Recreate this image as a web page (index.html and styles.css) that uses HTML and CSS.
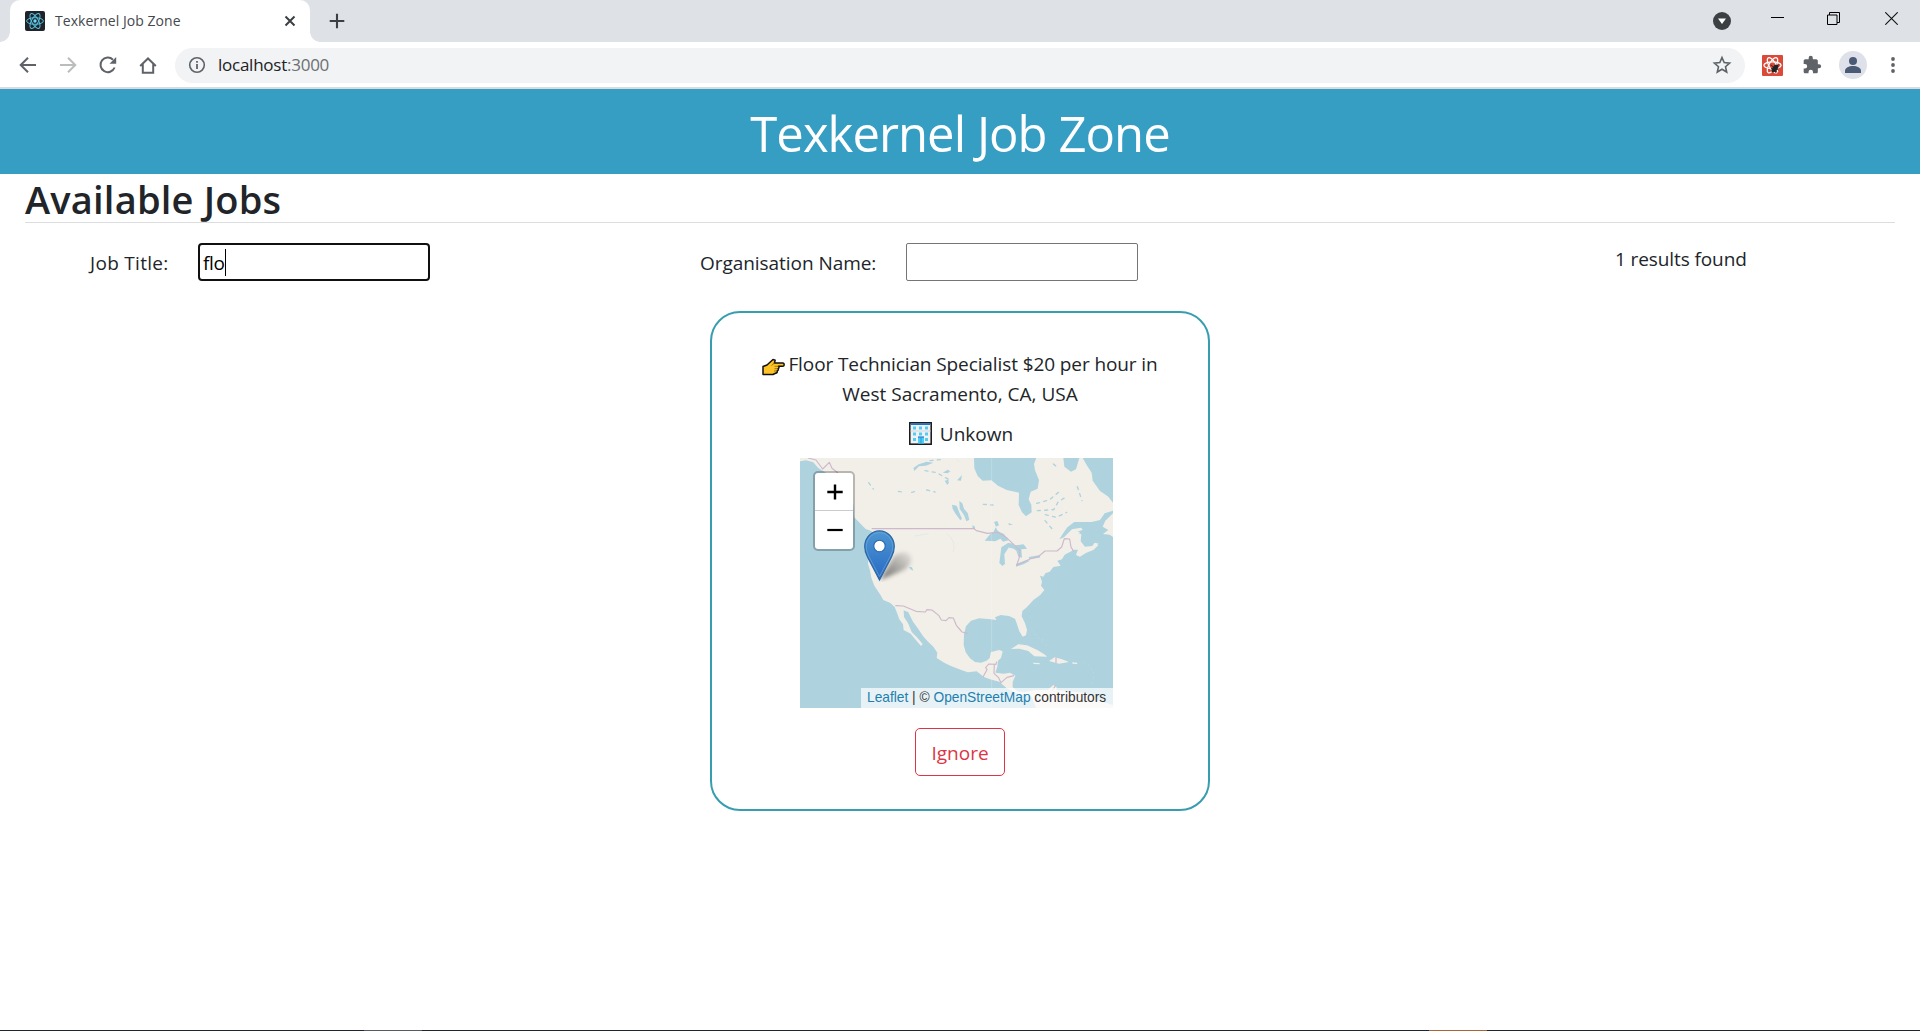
FILE: index.html
```html
<!DOCTYPE html>
<html lang="en">
<head>
<meta charset="utf-8">
<title>Texkernel Job Zone</title>
<link rel="stylesheet" href="styles.css">
</head>
<body>
<div class="tabstrip">
  <div class="tab">
    <svg class="favicon" viewBox="0 0 20 20"><rect width="20" height="20" rx="2" fill="#20232a"/><g fill="none" stroke="#53c1de" stroke-width="1"><ellipse cx="10" cy="10" rx="8.4" ry="3.3"/><ellipse cx="10" cy="10" rx="8.4" ry="3.3" transform="rotate(60 10 10)"/><ellipse cx="10" cy="10" rx="8.4" ry="3.3" transform="rotate(120 10 10)"/></g><circle cx="10" cy="10" r="1.7" fill="#61dafb"/></svg>
    <span class="tab-title">Texkernel Job Zone</span>
    <svg class="tab-close" viewBox="0 0 12 12"><path d="M1.5 1.5l9 9M10.5 1.5l-9 9" stroke="#3c4043" stroke-width="2"/></svg>
  </div>
  <svg class="new-tab" viewBox="0 0 16 16"><path d="M8 .7v14.6M.7 8h14.6" stroke="#3c4043" stroke-width="2.1"/></svg>
  <div class="window-buttons">
    <svg width="18" height="18" viewBox="0 0 18 18" class="wb-search"><circle cx="9" cy="9" r="9" fill="#3c4043"/><path d="M5 6.5h8L9 12z" fill="#fff"/></svg>
    <svg width="13" height="13" viewBox="0 0 13 13" class="wb-min"><path d="M0 5.5h13" stroke="#000"/></svg>
    <svg width="13" height="13" viewBox="0 0 13 13" class="wb-max"><path d="M.5 3h9.5v9.500H.5zM2.500 3V.5h10v10H10" fill="none" stroke="#000"/></svg>
    <svg width="13" height="13" viewBox="0 0 13 13" class="wb-close"><path d="M.3.3l12.400 12.400M12.700.3L.3 12.700" stroke="#111" stroke-width="1.100"/></svg>
  </div>
</div>
<div class="toolbar">
  <svg class="nav" viewBox="0 0 20 20"><path d="M18 10H3M10 2.700L2.700 10l7.300 7.300" fill="none" stroke="#5f6368" stroke-width="2"/></svg>
  <svg class="nav" viewBox="0 0 20 20"><path d="M2 10h15M10 2.700l7.300 7.300-7.300 7.300" fill="none" stroke="#babcbe" stroke-width="2"/></svg>
  <svg class="nav" viewBox="0 0 20 20"><path d="M16.600 12.500A7.300 7.300 0 1 1 15 4.700" fill="none" stroke="#5f6368" stroke-width="2"/><path d="M18.200 2v6.700h-6.700z" fill="#5f6368"/></svg>
  <svg class="nav" viewBox="0 0 20 20"><path d="M2.200 11L10 3.500l7.800 7.500M4.800 9.200v8.600h10.400V9.200" fill="none" stroke="#5f6368" stroke-width="2"/></svg>
  <div class="omnibox">
    <svg class="info" viewBox="0 0 18 18"><circle cx="9" cy="9" r="7.300" fill="none" stroke="#5f6368" stroke-width="1.600"/><path d="M9 8v5M9 5v1.800" stroke="#5f6368" stroke-width="1.800"/></svg>
    <span class="url">localhost<span class="port">:3000</span></span>
    <svg class="star" viewBox="0 0 20 20"><path d="M10 2.600l2.200 5 5.400.5-4.100 3.600 1.200 5.300-4.700-2.800L5.300 17l1.200-5.300-4.100-3.600 5.400-.5z" fill="none" stroke="#5f6368" stroke-width="1.600"/></svg>
  </div>
  <div class="extensions">
    <svg class="react-ext" viewBox="0 0 20 20"><rect width="20" height="20" rx="1" fill="#da4a37"/><g fill="none" stroke="#fff" stroke-width="1.200"><ellipse cx="10" cy="9.800" rx="8.200" ry="3.300"/><ellipse cx="10" cy="9.800" rx="8.200" ry="3.300" transform="rotate(60 10 9.800)"/><ellipse cx="10" cy="9.800" rx="8.200" ry="3.300" transform="rotate(120 10 9.800)"/></g><ellipse cx="12.300" cy="12.800" rx="2.300" ry="4.300" transform="rotate(40 12.300 12.800)" fill="#222"/><path d="M8 9.500l8 5M9.500 16l6.500-7M12 9.500l1 7.500M8.500 12.500l6 4" stroke="#222" stroke-width=".8"/></svg>
    <svg class="puzzle" viewBox="0 0 24 24"><path d="M20.500 11H19V7c0-1.100-.9-2-2-2h-4V3.500a2.500 2.500 0 0 0-5 0V5H4c-1.100 0-2 .9-2 2v3.800h1.500a2.700 2.700 0 0 1 0 5.400H2V20c0 1.100.9 2 2 2h3.800v-1.500a2.700 2.700 0 0 1 5.400 0V22H17c1.100 0 2-.9 2-2v-4h1.500a2.500 2.500 0 0 0 0-5z" fill="#5f6368"/></svg>
    <svg class="avatar" viewBox="0 0 28 28"><circle cx="14" cy="14" r="14" fill="#dee1e9"/><circle cx="14" cy="10" r="4" fill="#4b5a75"/><path d="M6 22v-2c0-3.200 4-5 8-5s8 1.800 8 5v2z" fill="#4b5a75"/></svg>
    <svg class="dots" viewBox="0 0 4 16"><g fill="#5f6368"><circle cx="2" cy="2" r="1.900"/><circle cx="2" cy="8" r="1.900"/><circle cx="2" cy="14" r="1.900"/></g></svg>
  </div>
</div>
<header class="banner"><span class="banner-text">Texkernel Job Zone</span></header>
<main>
  <h1><span class="h1-text">Available Jobs</span></h1>
  <div class="filters">
    <div class="filter"><span class="label label-job">Job Title:</span><div class="field focused"><span class="typed">flo</span><i class="caret"></i></div></div>
    <div class="filter"><span class="label label-org">Organisation Name:</span><div class="field"></div></div>
    <div class="results"><span class="results-text">1 results found</span></div>
  </div>
  <section class="card">
    <p class="job">
      <span class="line"><svg class="hand" viewBox="0 0 23 18"><path d="M1 8.500L5 7l6-5.500 2.200.6-.8 3H21c1.600.3 1.600 3 0 3.200h-4.500c.9.8.6 2-.4 2.300.5.9.1 1.900-.8 2.200.2 1.300-.6 2.300-1.800 2.500l-2.500 1.200H1z" fill="#fcc427" stroke="#111" stroke-width="1.500" stroke-linejoin="round"/><path d="M12.400 5.100L9.500 7.500M12.500 8.300h4M12.500 10.700h3.500M12 13h3" stroke="#7a5500" stroke-width=".7"/></svg><span class="l1">Floor Technician Specialist $20 per hour in</span></span>
      <span class="line"><span class="l2">West Sacramento, CA, USA</span></span>
    </p>
    <p class="company"><svg class="building" viewBox="0 0 23 23"><rect x=".8" y=".8" width="21.400" height="21.400" fill="#f0f1f3" stroke="#111" stroke-width="1.500"/><path d="M1.500 2.200h20" stroke="#1d6fd0" stroke-width="1.600"/><path d="M1.500 9h20" stroke="#d8d8dc"/><g fill="#50cdf5"><path d="M4 4.500h3v3H4zM10 4.500h3v3h-3zM16 4.500h3v3h-3zM4 10.500h3v3H4zM10 10.500h3v3h-3zM16 10.500h3v3h-3zM4 16h3v3H4zM16 16h3v3h-3z"/><path d="M9 15h6v6.500H9z"/></g><path d="M9 15h6" stroke="#1769ca"/><path d="M12 15v6.500" stroke="#209ed5"/></svg><span class="l3">Unkown</span></p>
    <div class="map">
      <svg class="tiles" viewBox="30 24 939 750" preserveAspectRatio="none">
        <rect x="30" y="24" width="939" height="750" fill="#aed3df"/>
        <g fill="#f2efe9">
          <path d="M30 24H552L553 55 563 78 578 92 604 91 624 107 650 120 687 128 686 165 696 187 708 199 725 187 724 164 716 148 722 125 743 116 747 90 735 61 732 42 739 24H820L823 50 843 65 858 58 868 24H878L890 45 905 68 908 92 930 123 955 140 969 158V182L944 190 930 210 905 216H853L832 232 818 252 808 268 822 262 846 238 873 233 878 239 859 247 874 253 872 274 885 290 907 288 914 278 926 281 906 296 885 303 868 319 858 314 864 299 852 299 824 314 816 328 802 332 812 347 790 351 779 365 766 370 760 380 750 377 756 395 753 407 763 420 750 436 731 449 711 471 697 483 695 499 705 520 711 539 708 556 698 560 688 544 680 520 675 506 657 498 632 495 615 502 619 510 596 507 567 505 543 512 528 529 522 552 521 585 527 607 540 625 555 636 573 638 590 632 599 624 603 606 628 600 638 604 633 624 624 632 622 650 616 668 641 671 660 668 676 677 668 696 668 712 684 725 705 726 735 720 773 720 790 705 800 711 799 720 890 730 920 750 969 765V774H738L725 740 679 730 650 715 628 695 600 688 582 681 560 664 533 667 508 658 483 648 464 639 440 624 442 608 430 590 412 573 399 558 385 537 369 515 355 487 341 481 342 501 355 521 365 546 380 561 398 582 393 588 375 567 362 551 341 540 339 523 328 508 321 488 314 471 301 459 280 450 271 434 253 407 244 383 240 361 234 342 236 314 240 276 251 249 232 233 213 218 192 202 191 178 188 145 160 120 143 94 124 77 104 66 84 53 70 37 48 31 30 34Z"/>
          <path d="M195 204l19 9 22 17 15 15-24-8zM969 190l-23 22-8 18 17 10-16 12 20 2 10 7zM860 316l8-8 24-10 26-14 7 2-15 14-21 8-19 12z"/>
          <path d="M663 597l22-14 26 3 32 15 23 14 5 5-38-1-18-16-27-7zM777 633l17-11 22 6 21 8-30 5zM728 638l20 1 2 4-18-1zM847 637l15 1-1 4-14-1zM853 244l18 3-8 4z"/>
        </g>
        <g fill="#aed3df">
          <path d="M584 272l15-18 12-9 6-13 7 12 18 8 13 19-16 4-8-9-15 8zM634 292l20-13 18 2-17 13-12 19 2 29-8 6-9-9zM656 278l20 8 25-3 10 13-17 2 2 25-11-3-6-18-8-6-13-3zM678 342l33-12 9 2-18 10-24 8zM716 321l35-6-2 8-31 4z"/>
          <path d="M508 153l9 7 5 16 11 13 5 20-9 5-7-18-13-20zM486 164l14 3 7 18 9 21-5 5-14-19-9-15zM612 216l10-3 5 13-9 4zM655 219l14 5-12 2zM547 226l7 3 2 10-8-2zM370 54l16-11 24-8 20 3-22 9-21 2-14 14zM458 68l15-9 8 5-8 6zM464 92l13-3-6 14zM501 91l15-16-3 17zM357 350l9 2 4 10-9-4zM725 85l9-3 6 16-9 8z"/>
        </g>
        <g fill="none" stroke="#aed3df" stroke-width="4" stroke-linecap="round" stroke-dasharray="9 13">
          <path d="M740 160l38-10 36-30M742 182l49-3 14-24 26-16M766 194l33 8 31-15M862 110l14 42M405 62l35 6 39 22-7 12M410 120l25 6M236 98l14 19M325 124l16 3M365 127l9-2M790 42l15 12M580 163l29 2M765 212l26 30M420 32l38-4M155 140l25 28"/>
        </g>
        <g fill="none" stroke="#dce6e4" stroke-width="2"><path d="M375 258l40-7M470 250q30 25 20 55M500 28l8 8"/></g>
        <path d="M605 24v750" stroke="#fff" stroke-opacity=".25" stroke-width="2"/>
        <g fill="none" stroke="#cdb9cb" stroke-width="3.500" stroke-linejoin="round">
          <path d="M54 24l24 6 20 27 20-20 8 18 18 14M245 236H552l7 6 33 8 32-3 28 18 28 27 10 9-2 21-8 24 15-8 25-11 25-7 20-17h36l14-12 8-25 16 1 4 24 8 13M316 467l24 1 38 16 28 2 5-7 15 1 20 16 8 14 14 2 9-9 13 1 9 22 12 14 5 6 19 5M579 681l7-13 5-9-4-6 9-11 22 1 2-8M613 644l-1 26 13 12 8 16 18-16 21-5M798 622v18M797 706l-9 14"/>
        </g>
        <g fill="none" stroke="#bad9df" stroke-width="3" stroke-dasharray="5 10"><path d="M725 540l15 20 18 17 18 14M880 635l20 13 10 18 0 20-7 18M755 570l12-3"/></g>
      </svg>
      <svg class="marker" viewBox="0 0 56 52">
        <defs><linearGradient id="pin" x1="0" y1="0" x2="0" y2="1"><stop offset="0" stop-color="#4e96d2"/><stop offset="1" stop-color="#2769c4"/></linearGradient><linearGradient id="shade" x1="0" y1="1" x2="1" y2="0"><stop offset="0" stop-color="#000" stop-opacity=".55"/><stop offset=".9" stop-color="#000" stop-opacity=".1"/></linearGradient><filter id="soft" x="-30%" y="-30%" width="160%" height="160%"><feGaussianBlur stdDeviation="2.200"/></filter></defs>
        <path d="M16 50L30 26Q41 19 46 25 50 33 40 40Z" fill="url(#shade)" filter="url(#soft)"/>
        <path d="M15.500 50L3.500 27Q.7 21.500.7 16.500A14.800 15.600 0 0 1 30.300 16.500Q30.300 21.500 27.500 27Z" fill="url(#pin)" stroke="#2b66a3" stroke-width="1.200"/>
        <path d="M15.500 46.500L4.900 26.500Q2.200 21 2.200 16.500A13.300 14 0 0 1 28.800 16.500Q28.800 21 26.100 26.500Z" fill="none" stroke="#72add9" stroke-width="1" opacity=".6"/>
        <circle cx="15.500" cy="16" r="5.700" fill="#fff" stroke="#2c68aa" stroke-width="1.100"/>
      </svg>
      <div class="zoom"><div class="zin"><svg viewBox="0 0 16 16"><path d="M8 .5v15M.3 8h15.400" stroke="#000" stroke-width="2.400"/></svg></div><div><svg viewBox="0 0 16 16"><path d="M.3 8h15.400" stroke="#000" stroke-width="2.200"/></svg></div></div>
      <div class="attribution"><span class="link">Leaflet</span> | © <span class="link">OpenStreetMap</span> contributors</div>
    </div>
    <button class="ignore"><span>Ignore</span></button>
  </section>
</main>
<footer class="taskbar"><i class="task task-gray"></i><i class="task task-orange"></i></footer>
</body>
</html>
```
FILE: styles.css
```css
* { box-sizing: border-box; }
body {
  margin: 0;
  height: 1031px;
  overflow: hidden;
  display: flex;
  flex-direction: column;
  background: #fff;
  color: #212529;
  font: 19px/30px "Open Sans", "Noto Sans", sans-serif;
}
svg { display: block; flex: none; }
p, h1 { margin: 0; }
span { white-space: nowrap; }

.tabstrip { height: 42px; flex: none; display: flex; align-items: center; background: #dee1e6; padding-left: 10px; }
.tab { position: relative; width: 300px; height: 42px; display: flex; align-items: center; padding: 0 14px 0 15px; background: #fff; border-radius: 10px 10px 0 0; }
.tab::before, .tab::after { content: ""; position: absolute; bottom: 0; width: 10px; height: 10px; }
.tab::before { left: -10px; background: radial-gradient(circle at 0 0, transparent 9.500px, #fff 10px); }
.tab::after { right: -10px; background: radial-gradient(circle at 100% 0, transparent 9.500px, #fff 10px); }
.favicon { width: 20px; height: 20px; }
.tab-title { margin-left: 10px; font-size: 14px; color: #45484c; letter-spacing: .05px; }
.tab-close { width: 12px; height: 12px; margin-left: auto; }
.new-tab { width: 16px; height: 16px; margin-left: 19px; }
.window-buttons { display: flex; margin-left: auto; height: 42px; padding-right: 22px; }
.wb-search { margin: 12px 40px 0 0; }
.wb-min { margin: 12px 43px 0 0; }
.wb-max { margin: 12px 45px 0 0; }
.wb-close { margin-top: 12px; }

.toolbar { height: 47px; flex: none; display: flex; align-items: center; padding: 1px 20px 0 18px; border-bottom: 2px solid #d9dbdf; }
.nav { width: 20px; height: 20px; margin-right: 20px; }
.omnibox { width: 1570px; height: 35px; margin-left: -3px; display: flex; align-items: center; padding: 0 13px; border-radius: 18px; background: #f1f3f4; }
.info { width: 18px; height: 18px; }
.url { margin-left: 12px; font-size: 17px; letter-spacing: -.25px; color: #202124; }
.port { color: #6b6f73; }
.star { width: 20px; height: 20px; margin-left: auto; }
.extensions { display: flex; align-items: center; margin-left: 17px; }
.react-ext { width: 21px; height: 21px; }
.puzzle { width: 20px; height: 20px; margin-left: 19px; }
.avatar { width: 28px; height: 28px; margin-left: 17px; }
.dots { width: 4px; height: 16px; margin-left: 24px; }

.banner { height: 85px; flex: none; display: flex; justify-content: center; align-items: center; padding-top: 4px; background: #369dc3; color: #fff; font-size: 49px; line-height: 81px; letter-spacing: -.95px; }
main { flex: 1; padding: 0 25px; }
h1 { height: 49px; border-bottom: 1px solid #dcddde; font-size: 38px; font-weight: 600; line-height: 50px; letter-spacing: .2px; }
.filters { display: grid; grid-template-columns: 610px 830px 1fr; padding: 20px 0 0 65px; height: 88px; }
.filter { display: flex; align-items: center; height: 38px; }
.label { padding-top: 2px; }
.label-job { width: 108px; letter-spacing: .3px; }
.label-org { width: 206px; letter-spacing: -.05px; }
.field { display: flex; align-items: center; width: 232px; height: 38px; border: 1px solid #767676; border-radius: 2px; }
.focused { border: 2px solid #101010; border-radius: 4px; padding-left: 3px; color: #000; }
.typed { padding-top: 1px; letter-spacing: -.3px; }
.caret { width: 1px; height: 27px; background: #000; }
.results { padding: 1px 0 0 85px; line-height: 30px; letter-spacing: -.1px; }

.card { width: 500px; height: 500px; margin: 0 auto; padding: 36px 40px 0; border: 2px solid #399db0; border-radius: 30px; display: flex; flex-direction: column; align-items: center; }
.line { display: flex; justify-content: center; height: 30px; }
.hand { width: 23px; height: 18px; margin: 9px 3px 0 0; }
.l1 { letter-spacing: -.1px; }
.company { display: flex; margin: 10px 0 0 2px; height: 30px; }
.building { width: 23px; height: 23px; margin: 3px 8px 0 0; }
.map { position: relative; width: 313px; height: 250px; margin: 9px 7px 0 0; }
.tiles { width: 313px; height: 250px; }
.marker { position: absolute; left: 64px; top: 72px; width: 56px; height: 52px; }
.zoom { position: absolute; left: 13px; top: 13px; width: 42px; height: 80px; border: 2px solid rgba(0, 0, 0, .24); border-radius: 5px; background: #fff; background-clip: padding-box; }
.zoom div { height: 38px; display: flex; align-items: center; justify-content: center; padding-left: 2px; }
.zoom .zin { border-bottom: 1px solid #ccc; }
.zoom svg { width: 16px; height: 16px; }
.attribution { position: absolute; right: 0; bottom: 0; width: 252px; height: 20px; padding-left: 6px; background: rgba(255, 255, 255, .7); color: #333; font: 13.750px/19px "Liberation Sans", Arial, sans-serif; white-space: nowrap; }
.link { color: #1f7fae; }
.ignore { width: 90px; height: 48px; margin-top: 20px; padding: 1px 0 0; border: 1px solid #dc3545; border-radius: 5px; background: #fff; color: #dc3545; font: inherit; }

.taskbar { height: 1px; flex: none; display: flex; background: #1c2536; }
.task { width: 58px; height: 1px; }
.task-gray { margin-left: 364px; background: #565a66; }
.task-orange { margin-left: 1007px; background: #a8653a; }
```
